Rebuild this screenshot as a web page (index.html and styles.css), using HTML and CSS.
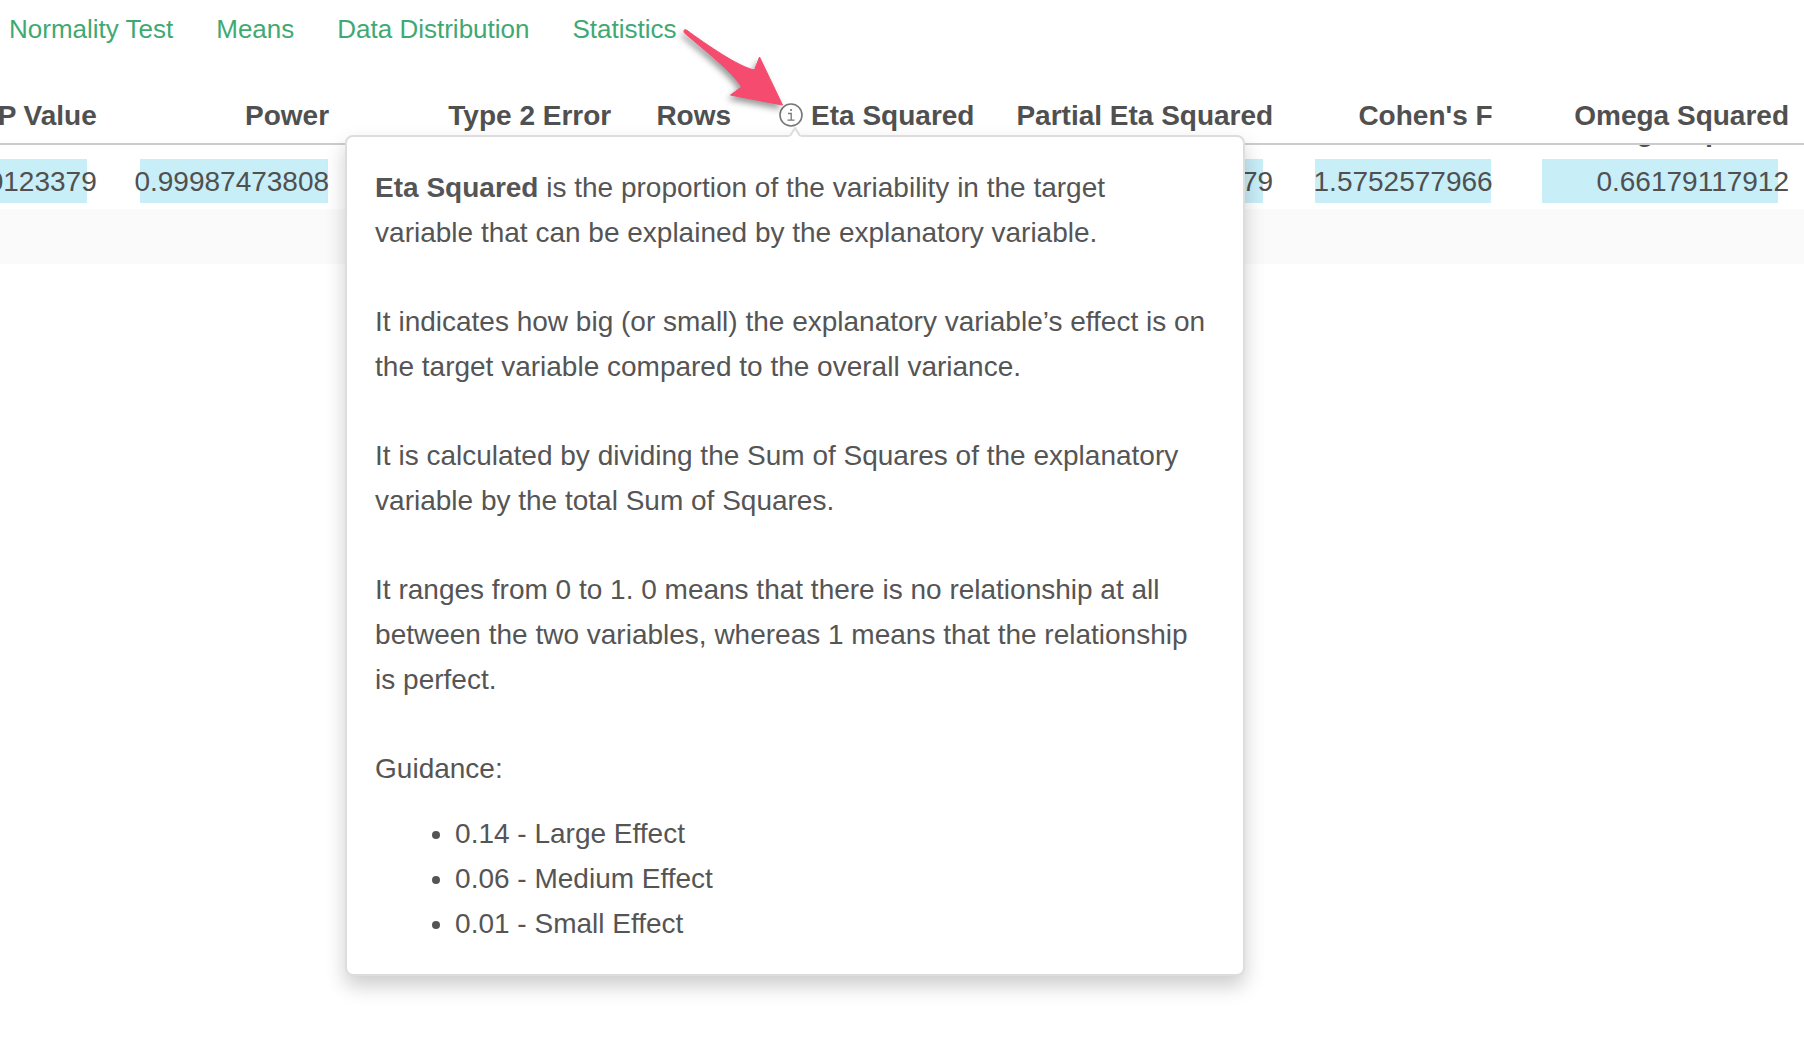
FILE: index.html
```
<!DOCTYPE html>
<html lang="en">

<head>
    <meta charset="UTF-8">
    <meta name="viewport" content="width=device-width, initial-scale=1.0">
    <title>Statistics</title>

    <link rel="stylesheet" href="styles.css">
</head>

<body>
    <nav class="tabs">
        <a href="#normality">Normality Test</a>
        <a href="#means">Means</a>
        <a href="#distribution">Data Distribution</a>
        <a href="#statistics">Statistics</a>
    </nav>

    <!-- fixed header -->
    <table class="stats stats-head">
        <colgroup>
            <col class="col-p"><col class="col-power"><col class="col-error"><col class="col-rows">
            <col class="col-eta"><col class="col-partial"><col class="col-cohen"><col class="col-omega">
        </colgroup>
        <thead>
            <tr>
                <th>P Value</th>
                <th>Power</th>
                <th>Type 2 Error</th>
                <th>Rows</th>
                <th>
                    <div class="info">
                        <button type="button" class="info-button" aria-label="About Eta Squared" aria-describedby="etaTip">
                            <svg width="24" height="24" viewBox="0 0 24 24" fill="none" stroke="#777">
                                <circle cx="12" cy="12" r="11" stroke-width="1.6" />
                                <path d="M9 10.5h3.2v6.5M8.5 17.2h7" stroke-width="1.3" />
                                <circle cx="12" cy="7" r="1.1" fill="#777" stroke="none" />
                            </svg>
                        </button>
                        <svg class="pointer" width="110" height="90" viewBox="0 0 110 90">
                            <path d="M7.500 10C28 25 60 47 75.500 50L80.500 37L103.500 85L51.500 75L62.500 67C54 52 25 30 5.500 13C4 10.500 5.500 9 7.500 10Z" fill="#f54b6e" stroke="#f54b6e" stroke-width="1" />
                        </svg>
                        <div class="tooltip" id="etaTip" role="tooltip">
                            <svg class="tooltip-tip" width="16" height="11" viewBox="0 0 16 11">
                                <path d="M2 11L3 10L8 2L13 10L14 11Z" fill="#fff" />
                                <path d="M3 10L8 2L13 10" fill="none" stroke="#ddd" stroke-width="2" />
                            </svg>
                            <p><b>Eta Squared</b> is the proportion of the variability in the target<br>variable that can be explained by the explanatory variable.</p>
                            <p>It indicates how big (or small) the explanatory variable’s effect is on the target variable compared to the overall variance.</p>
                            <p>It is calculated by dividing the Sum of Squares of the explanatory variable by the total Sum of Squares.</p>
                            <p>It ranges from 0 to 1. 0 means that there is no relationship at all between the two variables, whereas 1 means that the relationship is perfect.</p>
                            <p>Guidance:</p>
                            <ul>
                                <li>0.14 - Large Effect</li>
                                <li>0.06 - Medium Effect</li>
                                <li>0.01 - Small Effect</li>
                            </ul>
                        </div>
                    </div>Eta Squared
                </th>
                <th>Partial Eta Squared</th>
                <th>Cohen's F</th>
                <th>Omega Squared</th>
            </tr>
        </thead>
    </table>

    <!-- scrolled rows -->
    <div class="stats-scroll">
        <table class="stats stats-body">
            <colgroup>
                <col class="col-p"><col class="col-power"><col class="col-error"><col class="col-rows">
                <col class="col-eta"><col class="col-partial"><col class="col-cohen"><col class="col-omega">
            </colgroup>
            <thead aria-hidden="true">
                <tr>
                    <th></th>
                    <th></th>
                    <th></th>
                    <th></th>
                    <th></th>
                    <th></th>
                    <th></th>
                    <th>Omega Squared</th>
                </tr>
            </thead>
            <tbody>
                <tr>
                    <td><span class="bar" style="left: 15%; width: 66%"></span><span class="value">0123379</span></td>
                    <td><span class="bar" style="left: 10%; width: 81%"></span><span class="value">0.99987473808</span></td>
                    <td></td>
                    <td></td>
                    <td></td>
                    <td><span class="bar" style="left: 10%; width: 80%"></span><span class="value">0.71276229379</span></td>
                    <td><span class="bar" style="left: 10%; width: 80%"></span><span class="value">1.5752577966</span></td>
                    <td><span class="bar" style="left: 10%; width: 81%"></span><span class="value">0.66179117912</span></td>
                </tr>
                <tr class="empty">
                    <td colspan="8"></td>
                </tr>
            </tbody>
        </table>
    </div>
</body>

</html>
```

FILE: styles.css
```
* {
    box-sizing: border-box;
}

body {
    min-height: 100vh;
    margin: 0;
    font-family: "Liberation Sans", Arial, sans-serif;
    font-size: 28px;
    line-height: 45px;
    color: #505050;
    background-color: #fff;
    overflow-x: hidden;
}

.tabs {
    display: flex;
    gap: 43px;
    padding: 11px 9px 46px;
    font-size: 26px;
    line-height: 36px;
}

.tabs a {
    color: #3fa973;
    text-decoration: none;
}

/* the table is scrolled 40px to the right */
.stats {
    width: calc(100% + 40px);
    margin-left: -40px;
    table-layout: fixed;
    border-collapse: separate;
    border-spacing: 0;
}

.col-p { width: 8.5%; }
.col-power { width: 12.6%; }
.col-error { width: 15.3%; }
.col-rows { width: 6.5%; }
.col-eta { width: 13.2%; }
.col-partial { width: 16.2%; }
.col-cohen { width: 11.9%; }
.col-omega { width: 15.8%; }

.stats th,
.stats td {
    position: relative;
    height: 50px;
    padding: 0 20px 5px 0;
    text-align: right;
    vertical-align: top;
    white-space: nowrap;
}

.stats th:last-child,
.stats td:last-child {
    padding-right: 15px;
}

.stats-head th {
    height: 52px;
    border-bottom: 2px solid #ccc;
}

.stats-scroll {
    overflow: hidden;
}

.stats-body {
    margin-top: -36px;
}

.bar {
    position: absolute;
    top: 0;
    height: 44px;
    background-color: #c8eef8;
}

.value {
    position: relative;
}

.stats .empty td {
    height: 55px;
    background-color: #fafafa;
}

.info {
    display: inline-block;
    position: relative;
    height: 45px;
    padding-right: 8px;
    vertical-align: top;
}

.info-button {
    display: block;
    margin-top: 10px;
    padding: 0;
    border: none;
    background: none;
    cursor: pointer;
}

.info-button svg {
    display: block;
}

.pointer {
    position: absolute;
    right: 22px;
    bottom: 28px;
    z-index: 11;
    filter: drop-shadow(-2px 4px 3px rgba(0, 0, 0, 0.4));
}

.tooltip {
    position: absolute;
    top: 42px;
    left: 50%;
    z-index: 10;
    width: 900px;
    padding: 28px;
    transform: translateX(-50%);
    border: 2px solid #ddd;
    border-radius: 8px;
    background-color: #fff;
    box-shadow: 0 10px 20px rgba(0, 0, 0, 0.2);
    color: #555;
    font-weight: normal;
    text-align: left;
    white-space: normal;
}

.tooltip-tip {
    position: absolute;
    top: -11px;
    left: 50%;
    margin-left: -8px;
}

.tooltip p {
    margin: 0 0 44px;
}

.tooltip p:last-of-type {
    margin-bottom: 20px;
}

.tooltip ul {
    margin: 0;
    padding-left: 80px;
}
```
